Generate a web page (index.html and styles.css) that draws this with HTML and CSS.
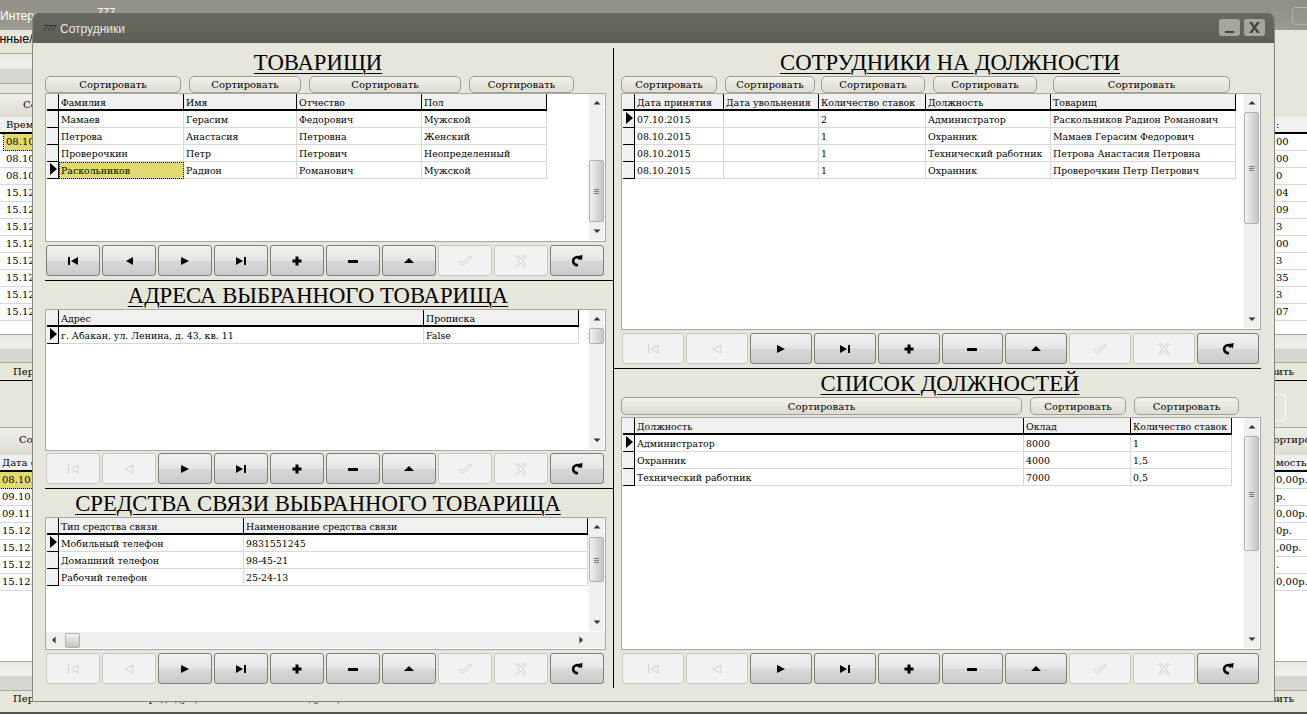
FILE: index.html
```html
<!DOCTYPE html>
<html lang="ru">
<head>
<meta charset="utf-8">
<title>Сотрудники</title>
<link rel="stylesheet" href="styles.css">
</head>
<body>
<svg class="sprite" width="0" height="0" aria-hidden="true">
  <symbol id="i-first" viewBox="0 0 16 16"><path d="M3 4h2v8H3zM13 4v8L6 8z"/></symbol>
  <symbol id="i-prev" viewBox="0 0 16 16"><path d="M12 4v8L5 8z"/></symbol>
  <symbol id="i-next" viewBox="0 0 16 16"><path d="M4 4v8l8-4z"/></symbol>
  <symbol id="i-last" viewBox="0 0 16 16"><path d="M3 4v8l7-4zM11 4h2v8h-2z"/></symbol>
  <symbol id="i-plus" viewBox="0 0 16 16"><path d="M6.500 3.500h3v3h3v3h-3v3h-3v-3h-3v-3h3z"/></symbol>
  <symbol id="i-minus" viewBox="0 0 16 16"><path d="M3 7h10v3H3z"/></symbol>
  <symbol id="i-up" viewBox="0 0 16 16"><path d="M8 5l5 5H3z"/></symbol>
  <symbol id="i-check" viewBox="0 0 16 16"><path class="ghost" d="M1.500 9.500l2-1.500 2 2L13 3l1.500 1.500L5.500 13z"/></symbol>
  <symbol id="i-x" viewBox="0 0 16 16"><path class="ghost" d="M3 3l2-.5L8 6l3-3.500 2 .5-3.500 4.500L13 13l-2 .5L8 10l-3 3.500-2-.5 3.500-5z"/></symbol>
  <symbol id="i-first-off" viewBox="0 0 16 16"><path class="ghost" d="M3.500 3.500v9M13 4v8L6 8z"/></symbol>
  <symbol id="i-prev-off" viewBox="0 0 16 16"><path class="ghost" d="M12 4v8L4 8z"/></symbol>
  <symbol id="i-redo" viewBox="0 0 16 16"><path class="redo-arc" d="M11 6.500C10.500 5 9 4 7.500 4.200 5.200 4.500 3.800 6.500 4.200 8.800 4.600 11 6.500 12.500 9 12"/><path d="M9 3l4.500-1-.5 5.500z"/></symbol>
  <symbol id="i-up-s" viewBox="0 0 8 8"><path d="M4 2l3.500 3.500H.5z"/></symbol>
  <symbol id="i-down-s" viewBox="0 0 8 8"><path d="M4 6L.5 2.500h7z"/></symbol>
  <symbol id="i-left-s" viewBox="0 0 8 8"><path d="M2 4l3.500-3.500v7z"/></symbol>
  <symbol id="i-right-s" viewBox="0 0 8 8"><path d="M6 4L2.500.5v7z"/></symbol>
</svg>

<div class="app">
  <header class="app-title"><span class="app-name">Интернет-магазин</span><span class="app-777">777</span><span class="app-min"></span></header>
  <div class="app-menu">Данные/</div>
  <div class="app-tools"><div class="app-bigbtn"></div></div>
  <div class="app-sort app-sort1"><span>Сортировать</span></div>
  <div class="bg-table bg-first">
    <div class="bg-row bg-head"><span>Время</span><span class="val">:</span></div>
    <div class="bg-row sel"><span>08.10.2015</span><span class="val">00</span></div>
    <div class="bg-row"><span>08.10.2015</span><span class="val">00</span></div>
    <div class="bg-row"><span>08.10.2015</span><span class="val">0</span></div>
    <div class="bg-row"><span>15.12.2015</span><span class="val">04</span></div>
    <div class="bg-row"><span>15.12.2015</span><span class="val">09</span></div>
    <div class="bg-row"><span>15.12.2015</span><span class="val">3</span></div>
    <div class="bg-row"><span>15.12.2015</span><span class="val">00</span></div>
    <div class="bg-row"><span>15.12.2015</span><span class="val">3</span></div>
    <div class="bg-row"><span>15.12.2015</span><span class="val">35</span></div>
    <div class="bg-row"><span>15.12.2015</span><span class="val">3</span></div>
    <div class="bg-row"><span>15.12.2015</span><span class="val">07</span></div>
  </div>
  <div class="app-bigbtn app-nav"></div>
  <div class="app-pager"><span>Первая</span><span>Обновить</span></div>
  <div class="app-mid"><span class="app-field"></span></div>
  <div class="app-sort app-sort2"><span>Сортировать</span><span>Сортировать</span></div>
  <div class="bg-table bg-second">
    <div class="bg-row bg-head"><span>Дата оплаты</span><span class="val">мость</span></div>
    <div class="bg-row sel"><span>08.10.2015</span><span class="val">0,00р.</span></div>
    <div class="bg-row"><span>09.10.2015</span><span class="val">р.</span></div>
    <div class="bg-row"><span>09.11.2015</span><span class="val">0,00р.</span></div>
    <div class="bg-row"><span>15.12.2015</span><span class="val">0р.</span></div>
    <div class="bg-row"><span>15.12.2015</span><span class="val">,00р.</span></div>
    <div class="bg-row"><span>15.12.2015</span><span class="val">.</span></div>
    <div class="bg-row"><span>15.12.2015</span><span class="val">0,00р.</span></div>
  </div>
  <div class="app-bigbtn app-nav app-nav2"></div>
  <div class="app-pager app-pager2"><span>Первая</span><span class="pg-prev">Предыдущая</span><span class="pg-next">Следующая</span><span>Обновить</span></div>
</div>

<section class="win">
  <header class="win-title">
    <span class="win-icon">777</span>
    <span class="win-name">Сотрудники</span>
    <span class="win-btn"><svg viewBox="0 0 21 17" width="21" height="17"><path d="M6 12h9v2H6z"/></svg></span>
    <span class="win-btn"><svg viewBox="0 0 21 17" width="21" height="17"><path d="M5 3h3l2.500 3.500L13 3h3l-4 5.500 4 5.500h-3l-2.500-3.500L8 14H5l4-5.500z"/></svg></span>
  </header>
  <div class="win-body">
    <div class="pane pane-left">
      <section class="sec sec-l1">
        <h2>ТОВАРИЩИ</h2>
        <div class="sort sort-l1"><button>Сортировать</button><button>Сортировать</button><button>Сортировать</button><button>Сортировать</button></div>
        <div class="grid">
          <div class="tbl">
            <div class="row head c-l1"><i></i><b>Фамилия</b><b>Имя</b><b>Отчество</b><b>Пол</b></div>
            <div class="row c-l1"><i></i><b>Мамаев</b><b>Герасим</b><b>Федорович</b><b>Мужской</b></div>
            <div class="row c-l1"><i></i><b>Петрова</b><b>Анастасия</b><b>Петровна</b><b>Женский</b></div>
            <div class="row c-l1"><i></i><b>Проверочкин</b><b>Петр</b><b>Петрович</b><b>Неопределенный</b></div>
            <div class="row c-l1"><i class="cur"></i><b class="focus">Раскольников</b><b>Радион</b><b>Романович</b><b>Мужской</b></div>
          </div>
          <div class="vbar"><svg class="arr"><use href="#i-up-s"/></svg><div class="thumb th-l1"></div><svg class="arr arr-end"><use href="#i-down-s"/></svg></div>
        </div>
        <div class="nav">
          <button><svg><use href="#i-first"/></svg></button><button><svg><use href="#i-prev"/></svg></button><button><svg><use href="#i-next"/></svg></button><button><svg><use href="#i-last"/></svg></button><button><svg><use href="#i-plus"/></svg></button><button><svg><use href="#i-minus"/></svg></button><button><svg><use href="#i-up"/></svg></button><button class="off"><svg><use href="#i-check"/></svg></button><button class="off"><svg><use href="#i-x"/></svg></button><button><svg><use href="#i-redo"/></svg></button>
        </div>
      </section>
      <section class="sec sec-l2">
        <h2>АДРЕСА ВЫБРАННОГО ТОВАРИЩА</h2>
        <div class="grid">
          <div class="tbl">
            <div class="row head c-l2"><i></i><b>Адрес</b><b>Прописка</b></div>
            <div class="row c-l2"><i class="cur"></i><b>г. Абакан, ул. Ленина, д. 43, кв. 11</b><b>False</b></div>
          </div>
          <div class="vbar"><svg class="arr"><use href="#i-up-s"/></svg><div class="thumb th-l2"></div><svg class="arr arr-end"><use href="#i-down-s"/></svg></div>
        </div>
        <div class="nav">
          <button class="off"><svg><use href="#i-first-off"/></svg></button><button class="off"><svg><use href="#i-prev-off"/></svg></button><button><svg><use href="#i-next"/></svg></button><button><svg><use href="#i-last"/></svg></button><button><svg><use href="#i-plus"/></svg></button><button><svg><use href="#i-minus"/></svg></button><button><svg><use href="#i-up"/></svg></button><button class="off"><svg><use href="#i-check"/></svg></button><button class="off"><svg><use href="#i-x"/></svg></button><button><svg><use href="#i-redo"/></svg></button>
        </div>
      </section>
      <section class="sec sec-l3">
        <h2>СРЕДСТВА СВЯЗИ ВЫБРАННОГО ТОВАРИЩА</h2>
        <div class="grid grid-h">
          <div class="tbl">
            <div class="row head c-l3"><i></i><b>Тип средства связи</b><b>Наименование средства связи</b></div>
            <div class="row c-l3"><i class="cur"></i><b>Мобильный телефон</b><b>9831551245</b></div>
            <div class="row c-l3"><i></i><b>Домашний телефон</b><b>98-45-21</b></div>
            <div class="row c-l3"><i></i><b>Рабочий телефон</b><b>25-24-13</b></div>
          </div>
          <div class="vbar"><svg class="arr"><use href="#i-up-s"/></svg><div class="thumb th-l3"></div><svg class="arr arr-end"><use href="#i-down-s"/></svg></div>
          <div class="hbar"><svg class="arr"><use href="#i-left-s"/></svg><div class="thumb-h"></div><svg class="arr arr-right"><use href="#i-right-s"/></svg></div>
        </div>
        <div class="nav">
          <button class="off"><svg><use href="#i-first-off"/></svg></button><button class="off"><svg><use href="#i-prev-off"/></svg></button><button><svg><use href="#i-next"/></svg></button><button><svg><use href="#i-last"/></svg></button><button><svg><use href="#i-plus"/></svg></button><button><svg><use href="#i-minus"/></svg></button><button><svg><use href="#i-up"/></svg></button><button class="off"><svg><use href="#i-check"/></svg></button><button class="off"><svg><use href="#i-x"/></svg></button><button><svg><use href="#i-redo"/></svg></button>
        </div>
      </section>
    </div>
    <div class="pane pane-right">
      <section class="sec sec-r1">
        <h2>СОТРУДНИКИ НА ДОЛЖНОСТИ</h2>
        <div class="sort sort-r1"><button>Сортировать</button><button>Сортировать</button><button>Сортировать</button><button>Сортировать</button><button>Сортировать</button></div>
        <div class="grid">
          <div class="tbl">
            <div class="row head c-r1"><i></i><b>Дата принятия</b><b>Дата увольнения</b><b>Количество ставок</b><b>Должность</b><b>Товарищ</b></div>
            <div class="row c-r1"><i class="cur"></i><b>07.10.2015</b><b></b><b>2</b><b>Администратор</b><b>Раскольников Радион Романович</b></div>
            <div class="row c-r1"><i></i><b>08.10.2015</b><b></b><b>1</b><b>Охранник</b><b>Мамаев Герасим Федорович</b></div>
            <div class="row c-r1"><i></i><b>08.10.2015</b><b></b><b>1</b><b>Технический работник</b><b>Петрова Анастасия Петровна</b></div>
            <div class="row c-r1"><i></i><b>08.10.2015</b><b></b><b>1</b><b>Охранник</b><b>Проверочкин Петр Петрович</b></div>
          </div>
          <div class="vbar"><svg class="arr"><use href="#i-up-s"/></svg><div class="thumb th-r1"></div><svg class="arr arr-end"><use href="#i-down-s"/></svg></div>
        </div>
        <div class="nav">
          <button class="off"><svg><use href="#i-first-off"/></svg></button><button class="off"><svg><use href="#i-prev-off"/></svg></button><button><svg><use href="#i-next"/></svg></button><button><svg><use href="#i-last"/></svg></button><button><svg><use href="#i-plus"/></svg></button><button><svg><use href="#i-minus"/></svg></button><button><svg><use href="#i-up"/></svg></button><button class="off"><svg><use href="#i-check"/></svg></button><button class="off"><svg><use href="#i-x"/></svg></button><button><svg><use href="#i-redo"/></svg></button>
        </div>
      </section>
      <section class="sec sec-r2">
        <h2>СПИСОК ДОЛЖНОСТЕЙ</h2>
        <div class="sort sort-r2"><button>Сортировать</button><button>Сортировать</button><button>Сортировать</button></div>
        <div class="grid">
          <div class="tbl">
            <div class="row head c-r2"><i></i><b>Должность</b><b>Оклад</b><b>Количество ставок</b></div>
            <div class="row c-r2"><i class="cur"></i><b>Администратор</b><b>8000</b><b>1</b></div>
            <div class="row c-r2"><i></i><b>Охранник</b><b>4000</b><b>1,5</b></div>
            <div class="row c-r2"><i></i><b>Технический работник</b><b>7000</b><b>0,5</b></div>
          </div>
          <div class="vbar"><svg class="arr"><use href="#i-up-s"/></svg><div class="thumb th-r2"></div><svg class="arr arr-end"><use href="#i-down-s"/></svg></div>
        </div>
        <div class="nav">
          <button class="off"><svg><use href="#i-first-off"/></svg></button><button class="off"><svg><use href="#i-prev-off"/></svg></button><button><svg><use href="#i-next"/></svg></button><button><svg><use href="#i-last"/></svg></button><button><svg><use href="#i-plus"/></svg></button><button><svg><use href="#i-minus"/></svg></button><button><svg><use href="#i-up"/></svg></button><button class="off"><svg><use href="#i-check"/></svg></button><button class="off"><svg><use href="#i-x"/></svg></button><button><svg><use href="#i-redo"/></svg></button>
        </div>
      </section>
    </div>
  </div>
</section>
</body>
</html>
```
FILE: styles.css
```css
* { box-sizing: border-box; }
html, body { margin: 0; padding: 0; height: 714px; overflow: hidden; }
body { position: relative; background: #e6e6da; font-family: "DejaVu Serif", "Liberation Serif", serif; font-size: 10px; color: #000; }
.sprite { position: absolute; }
.ghost { fill: none; stroke: #d0d0cc; stroke-width: 1; }
.redo-arc { fill: none; stroke: #000; stroke-width: 2.600; }

/* background application window */
.app { height: 714px; display: flex; flex-direction: column; overflow: hidden; border-bottom: 2px solid #55554d; }
.app-title { height: 30px; background: linear-gradient(#8f8f86, #9a9a90); color: #fff; position: relative; font: 12px "Liberation Sans", sans-serif; flex: none; }
.app-name { position: absolute; left: 0; top: 9px; }
.app-777 { position: absolute; left: 97px; top: 6px; font-size: 11px; }
.app-min { position: absolute; left: 1292px; top: 7px; width: 22px; height: 18px; border: 1px solid #b4b4aa; border-radius: 3px; }
.app-menu { height: 18px; flex: none; font: 12.500px/19px "Liberation Sans", sans-serif; text-indent: -16px; }
.app-tools { height: 45px; flex: none; padding: 5px 0 9px; width: 640px; }
.app-bigbtn { height: 100%; background: linear-gradient(#e8e8e4, #f0f0ec 45%, #d4d4ce 55%, #d8d8d2); border-top: 1px solid #a8a89e; border-bottom: 1px solid #a8a89e; }
.app-sort { height: 24px; flex: none; padding-top: 1px; display: flex; justify-content: space-between; font-size: 10px; line-height: 20px; }
.app-sort1 { width: 640px; border-top: 1px solid #a8a89e; background: linear-gradient(#f0f0ea, #dcdcd0); }
.app-sort span:first-child { margin-left: 23px; }
.bg-table { background: #fff; flex: none; }
.bg-first { height: 217px; }
.bg-second { height: 206px; }
.bg-row { height: 17px; display: flex; justify-content: space-between; line-height: 16px; font-size: 10px; border-bottom: 1px solid #d8d8d8; padding-left: 6px; }
.bg-second .bg-row { padding-left: 2px; }
.bg-head { background: #f0f0f0; border-bottom: 2px solid #000; }
.val { width: 31px; white-space: nowrap; overflow: hidden; }
.sel span:first-child { background: #dfdb6e; outline: 1px dotted #000; margin-left: -2px; padding-left: 2px; }
.app-nav { height: 29px; flex: none; }
.app-nav2 { height: 30px; }
.app-pager { height: 18px; flex: none; display: flex; justify-content: space-between; padding: 0 13px; line-height: 18px; border-bottom: 1px solid #000; background: #e6e6da; }
.app-pager2 { height: 22px; justify-content: flex-start; border-bottom: 0; line-height: 16px; }
.app-pager2 span:last-child { margin-left: auto; }
.pg-prev { margin-left: 88px; }
.pg-next { margin-left: 80px; }
.app-mid { height: 47px; flex: none; border-bottom: 1px solid #a8a89e; position: relative; }
.app-field { position: absolute; left: 1262px; top: 13px; width: 24px; height: 27px; border: 1px solid #fff; border-radius: 3px; }
.app-sort2 { height: 27px; line-height: 22px; background: linear-gradient(#f0f0ea, #dcdcd0); }
.app-sort2 span:first-child { margin-left: 19px; }
.app-sort2 span:last-child { margin-right: -26px; }

/* floating window */
.win { position: absolute; left: 32px; top: 13px; width: 1243px; height: 689px; background: #e6e6da; border: 1px solid #87877d; border-top: 0; border-radius: 6px 6px 0 0; display: flex; flex-direction: column; overflow: hidden; }
.win-title { height: 30px; flex: none; background: linear-gradient(#686a60, #5d5e55); display: flex; align-items: center; gap: 4px; padding: 0 9px 0 10px; color: #e8e8e0; }
.win-icon { font: italic 9px "Liberation Sans", sans-serif; color: #2e2e2a; width: 13px; letter-spacing: -1px; }
.win-name { font: 12px "Liberation Sans", "Noto Sans", sans-serif; flex: 1; margin-top: 1px; }
.win-btn { width: 21px; height: 17px; background: #a5a69c; border-radius: 3px; margin-top: -1px; }
.win-btn svg { display: block; fill: #45453f; }
.win-body { display: flex; padding: 5px 0 0 12px; }
.pane { display: flex; flex-direction: column; height: 640px; }
.pane-left { width: 569px; border-right: 1px solid #000; }
.pane-right { width: 647px; }

.sec { display: flex; flex-direction: column; flex: none; }
.sec-l1 { height: 233px; border-bottom: 1px solid #000; padding-right: 7px; }
.sec-l2 { height: 208px; border-bottom: 1px solid #000; padding-right: 7px; }
.sec-l3 { height: 199px; padding-right: 7px; }
.sec-r1 { height: 321px; border-bottom: 1px solid #000; padding-left: 7px; }
.sec-r2 { height: 319px; padding-left: 7px; }
h2 { margin: 0; height: 28px; flex: none; text-align: center; font: 400 22.700px/29px "Liberation Serif", serif; text-decoration: underline; text-decoration-thickness: 1px; text-underline-offset: 3px; color: #000; }
.pane-left h2 { padding-right: 15px; }
.pane-right h2 { padding-left: 18px; }

.sort { display: grid; column-gap: 8px; height: 17px; flex: none; }
.sort button { font: 10px/13px "DejaVu Serif", serif; color: #000; padding: 0; height: 17px; border: 1.500px solid #9e9e94; border-radius: 5px; background: linear-gradient(#f2f2ec, #dcdcd0); }
.sort-l1 { grid-template-columns: 136px 112px 152px 105px; }
.sort-r1 { grid-template-columns: 96px 90px 102px 104px 177px; }
.sort-r1 button:nth-child(3) { margin-left: -2px; }
.sort-r1 button:nth-child(5) { margin-left: 8px; width: 177px; }
.sort-r2 { grid-template-columns: 401px 96px 105px; height: 20px; }
.sort-r2 button { height: 18px; }

.grid { flex: 1; min-height: 0; background: #fff; border: 1px solid #a8a8a4; position: relative; display: grid; grid-template-columns: 1fr 17px; overflow: hidden; }
.grid-h { grid-template-rows: 1fr 17px; }
.tbl { padding: 0 0 0 1px; min-width: 0; }
.row { display: grid; height: 17px; font-size: 9.400px; line-height: 15px; }
.row b { font-weight: 400; padding: 1px 0 0 2px; white-space: nowrap; overflow: hidden; border-right: 1px solid #d8d8d8; border-bottom: 1px solid #d8d8d8; }
.row i { background: #f0f0f0; border-right: 1px solid #000; border-bottom: 1px solid #000; position: relative; }
.head b { background: #f0f0f0; border-right: 1px solid #000; border-bottom: 2px solid #000; }
.head i { border-bottom: 2px solid #000; }
.cur::after { content: ""; position: absolute; left: 3px; top: 1px; border-left: 7px solid #000; border-top: 6px solid transparent; border-bottom: 6px solid transparent; }
.focus { background: #dfdb6e; outline: 1px dotted #000; outline-offset: -1px; }
.c-l1 { grid-template-columns: 12px 125px 113px 125px 125px; }
.c-l2 { grid-template-columns: 12px 365px 155px; }
.c-l3 { grid-template-columns: 12px 185px 344px; }
.c-r1 { grid-template-columns: 12px 89px 95px 107px 125px 185px; }
.c-r2 { grid-template-columns: 12px 389px 107px 101px; }

.vbar { background: #efefef; border-left: 1px solid #f6f6f6; margin: 0 1px 1px 0; display: flex; flex-direction: column; align-items: center; }
.arr { width: 8px; height: 8px; flex: none; fill: #333; }
.vbar .arr { margin-top: 5px; }
.vbar .arr-end { margin-top: auto; margin-bottom: 5px; }
.thumb { width: 100%; margin-top: 5px; flex: none; border: 1px solid #b0b0b0; border-radius: 2px; background: linear-gradient(90deg, #f2f2f2, #c4c4c4); position: relative; }
.thumb::after { content: ""; position: absolute; left: 4px; right: 4px; top: 50%; height: 5px; margin-top: -2px; background: repeating-linear-gradient(#777 0 1px, transparent 1px 2px); }
.th-l1 { margin-top: 53px; height: 62px; }
.th-l2 { margin-top: 5px; height: 16px; }
.th-l2::after { display: none; }
.th-l3 { margin-top: 6px; height: 45px; }
.th-r1 { margin-top: 5px; height: 112px; }
.th-r2 { margin-top: 5px; height: 115px; }
.hbar { grid-column: 1 / 3; background: #efefef; display: flex; align-items: center; padding: 0 20px 0 4px; margin: 0 0 1px; }
.thumb-h { width: 15px; height: 15px; margin-left: 7px; border: 1px solid #b0b0b0; border-radius: 2px; background: linear-gradient(#f2f2f2, #c4c4c4); }
.arr-right { margin-left: auto; }

.nav { display: grid; grid-auto-flow: column; grid-auto-columns: 1fr; gap: 2px; height: 31px; flex: none; margin: 3px 2px 4px 1px; }
.sec-l2 .nav { margin-top: 2px; }
.nav button { padding: 0; margin: 0; border: 1px solid #7e7e7e; border-radius: 3px; background: linear-gradient(#f0f0f0, #e6e6e6 48%, #d8d8d8 52%, #cbcbcb); display: flex; align-items: center; justify-content: center; }
.nav svg { width: 16px; height: 16px; display: block; fill: #000; }
.nav .off { border-color: #c6c6c6; background: #f2f2f2; }
.nav .off svg { fill: none; }
```
